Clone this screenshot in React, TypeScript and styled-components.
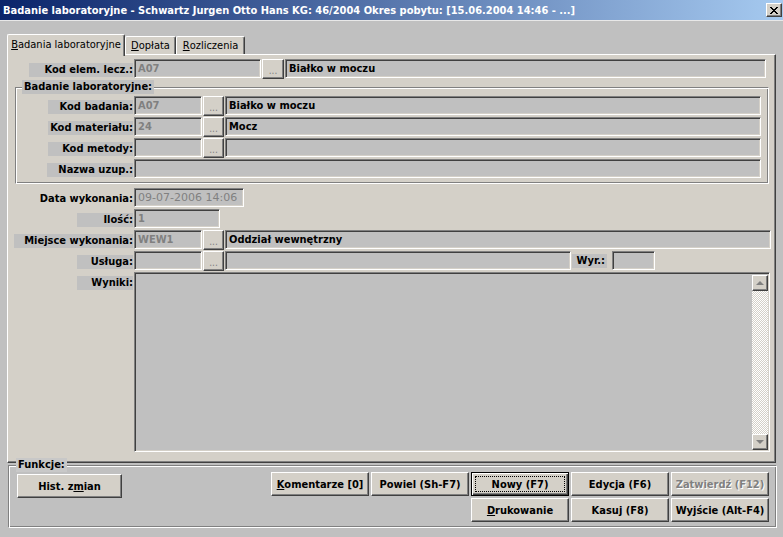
import React from 'react';
import styled, { createGlobalStyle, css } from 'styled-components';

const GlobalStyle = createGlobalStyle`
  html, body {
    margin: 0;
    padding: 0;
    background: #c0c0c0;
  }
  body {
    font-family: "DejaVu Sans Condensed", "DejaVu Sans", sans-serif;
    font-stretch: condensed;
    font-size: 11px;
    color: #000;
  }
  * {
    box-sizing: border-box;
  }
`;

const App = () => {
  return (
    <>
      <GlobalStyle />
      <Window>
        <TitleBar>
          <TitleText>
            Badanie laboratoryjne - Schwartz Jurgen Otto Hans KG: 46/2004 Okres pobytu: [15.06.2004 14:46 - ...]
          </TitleText>
          <CloseButton>
            <svg width="8" height="7" viewBox="0 0 8 7">
              <path d="M0 0 L7 7 M1 0 L8 7 M7 0 L0 7 M8 0 L1 7" stroke="#000" strokeWidth="1" />
            </svg>
          </CloseButton>
        </TitleBar>

        <Body>
          <TabStrip>
            <Tab $active $w={118}>
              <U>B</U>adania laboratoryjne
            </Tab>
            <Tab $w={51}>
              <U>D</U>opłata
            </Tab>
            <Tab $w={69}>
              <U>R</U>ozliczenia
            </Tab>
          </TabStrip>

          <TabPage>
            <Row $mt={4}>
              <LabelCell $w={126}>
                <LabelBox $w={104}>Kod elem. lecz.:</LabelBox>
              </LabelCell>
              <Field $w={127} $dim>A07</Field>
              <DotsButton $w={22}>...</DotsButton>
              <Field $w={481}>Białko w moczu</Field>
            </Row>

            <Group>
              <GroupTitle>Badanie laboratoryjne:</GroupTitle>
              <Row>
                <LabelCell $w={117}>
                  <LabelBox $w={85}>Kod badania:</LabelBox>
                </LabelCell>
                <Field $w={68} $dim>A07</Field>
                <DotsButton $w={21}>...</DotsButton>
                <Field $w={536}>Białko w moczu</Field>
              </Row>
              <Row>
                <LabelCell $w={117}>
                  <LabelBox $w={85}>Kod materiału:</LabelBox>
                </LabelCell>
                <Field $w={68} $dim>24</Field>
                <DotsButton $w={21}>...</DotsButton>
                <Field $w={536}>Mocz</Field>
              </Row>
              <Row>
                <LabelCell $w={117}>
                  <LabelBox $w={85}>Kod metody:</LabelBox>
                </LabelCell>
                <Field $w={68} />
                <DotsButton $w={21}>...</DotsButton>
                <Field $w={536} />
              </Row>
              <Row>
                <LabelCell $w={117}>
                  <LabelBox $w={86}>Nazwa uzup.:</LabelBox>
                </LabelCell>
                <Field $w={627} />
              </Row>
            </Group>

            <Row $mt={4}>
              <LabelCell $w={126}>
                <LabelBox $plain>Data wykonania:</LabelBox>
              </LabelCell>
              <Field $w={110} $dim $thin>09-07-2006 14:06</Field>
            </Row>
            <Row>
              <LabelCell $w={126}>
                <LabelBox $w={56}>Ilość:</LabelBox>
              </LabelCell>
              <Field $w={86} $dim>1</Field>
            </Row>
            <Row>
              <LabelCell $w={126}>
                <LabelBox $w={119}>Miejsce wykonania:</LabelBox>
              </LabelCell>
              <Field $w={68} $dim>WEW1</Field>
              <DotsButton $w={21}>...</DotsButton>
              <Field $w={546}>Oddział wewnętrzny</Field>
            </Row>
            <Row>
              <LabelCell $w={126}>
                <LabelBox $w={56}>Usługa:</LabelBox>
              </LabelCell>
              <Field $w={68} />
              <DotsButton $w={21}>...</DotsButton>
              <Field $w={346} />
              <InlineLabel $w={35}>Wyr.:</InlineLabel>
              <Field $w={43} />
            </Row>
            <Row $tall>
              <LabelCell $w={126}>
                <LabelBox $w={56}>Wyniki:</LabelBox>
              </LabelCell>
              <Memo>
                <ScrollBar>
                  <ScrollArrow $dir="up" />
                  <ScrollTrack />
                  <ScrollArrow $dir="down" />
                </ScrollBar>
              </Memo>
            </Row>
          </TabPage>

          <FuncGroup>
            <FuncTitle>Funkcje:</FuncTitle>
            <HistButton>
              Hist. z<U>m</U>ian
            </HistButton>
            <ButtonGrid>
              <Button>
                <U>K</U>omentarze [0]
              </Button>
              <Button>Powiel (Sh-F7)</Button>
              <Button $focused>
                <FocusRect>Nowy (F7)</FocusRect>
              </Button>
              <Button>Edycja (F6)</Button>
              <Button $disabled>Zatwierdź (F12)</Button>
              <Button $col={3}>
                <U>D</U>rukowanie
              </Button>
              <Button>Kasuj (F8)</Button>
              <Button>Wyjście (Alt-F4)</Button>
            </ButtonGrid>
          </FuncGroup>
        </Body>
      </Window>
    </>
  );
};

const raised = css`
  background: #d4d0c8;
  border: 1px solid;
  border-color: #fff #404040 #404040 #fff;
  box-shadow: inset -1px -1px #808080, inset 1px 1px #d4d0c8;
`;

const sunken = css`
  border: 1px solid;
  border-color: #808080 #fff #fff #808080;
  box-shadow: inset 1px 1px #404040, inset -1px -1px #d4d0c8;
`;

const Window = styled.div`
  width: 783px;
  height: 537px;
  background: #c0c0c0;
  display: flex;
  flex-direction: column;
  overflow: hidden;
`;

const TitleBar = styled.div`
  height: 21px;
  flex: none;
  display: flex;
  align-items: center;
  justify-content: space-between;
  padding: 0 1px 0 3px;
  background: linear-gradient(to right, #0a246a, #a6caf0);
  border-bottom: 1px solid #e8e8e8;
`;

const TitleText = styled.div`
  color: #fff;
  font-weight: bold;
  white-space: nowrap;
`;

const CloseButton = styled.div`
  ${raised};
  width: 16px;
  height: 14px;
  display: flex;
  align-items: center;
  justify-content: center;
`;

const Body = styled.div`
  flex: 1;
  padding: 13px 7px 0 7px;
  display: flex;
  flex-direction: column;
`;

const U = styled.span`
  text-decoration: underline;
`;

const TabStrip = styled.div`
  height: 20px;
  display: flex;
  align-items: flex-end;
  position: relative;
  z-index: 1;
`;

const Tab = styled.div<{ $active?: boolean; $w: number }>`
  width: ${(p) => p.$w}px;
  height: ${(p) => (p.$active ? 22 : 18)}px;
  margin-bottom: ${(p) => (p.$active ? -2 : 0)}px;
  background: #d4d0c8;
  border-top: 1px solid #fff;
  border-left: 1px solid #fff;
  border-right: 1px solid #404040;
  box-shadow: inset -1px 0 #808080;
  border-radius: 2px 2px 0 0;
  display: flex;
  align-items: center;
  justify-content: center;
  padding-bottom: ${(p) => (p.$active ? 3 : 0)}px;
  white-space: nowrap;
`;

const TabPage = styled.div`
  height: 409px;
  flex: none;
  background: #d4d0c8;
  border: 1px solid;
  border-color: #fff #404040 #404040 #fff;
  box-shadow: inset -1px -1px #808080;
  display: flex;
  flex-direction: column;
`;

const Row = styled.div<{ $mt?: number; $tall?: boolean }>`
  display: flex;
  align-items: flex-start;
  gap: 1px;
  height: ${(p) => (p.$tall ? 180 : 21)}px;
  margin-top: ${(p) => p.$mt ?? 0}px;
  flex: none;
`;

const LabelCell = styled.div<{ $w: number }>`
  width: ${(p) => p.$w}px;
  flex: none;
  display: flex;
  justify-content: flex-end;
  padding: 4px 1px 0 0;
  margin-right: -1px;
`;

const LabelBox = styled.div<{ $w?: number; $plain?: boolean }>`
  width: ${(p) => (p.$w ? `${p.$w}px` : 'auto')};
  height: 14px;
  line-height: 14px;
  text-align: right;
  white-space: nowrap;
  font-weight: bold;
  background: ${(p) => (p.$plain ? 'transparent' : '#c0c0c0')};
`;

const InlineLabel = styled(LabelBox)`
  margin: 3px 4px 0 0;
  padding-right: 2px;
`;

const Field = styled.div<{ $w: number; $dim?: boolean; $thin?: boolean }>`
  ${sunken};
  width: ${(p) => p.$w}px;
  height: 19px;
  flex: none;
  background: #c0c0c0;
  padding: 0 0 0 3px;
  line-height: 17px;
  color: ${(p) => (p.$dim ? '#808080' : '#000')};
  font-weight: ${(p) => (p.$thin ? 'normal' : 'bold')};
  ${(p) =>
    p.$thin &&
    css`
      font-family: "DejaVu Sans", sans-serif;
      font-stretch: normal;
    `}
  white-space: nowrap;
  overflow: hidden;
`;

const DotsButton = styled.div<{ $w: number }>`
  ${raised};
  width: ${(p) => p.$w}px;
  height: 20px;
  flex: none;
  color: #808080;
  text-align: center;
  line-height: 22px;
  font-size: 10px;
`;

const Group = styled.div`
  position: relative;
  margin: 7px 6px 0 7px;
  height: 97px;
  flex: none;
  border: 1px solid;
  border-color: #808080 #fff #fff #808080;
  box-shadow: inset 1px 1px #fff, inset -1px -1px #808080;
  padding: 8px 0 0 1px;
`;

const GroupTitle = styled.div`
  position: absolute;
  top: -8px;
  left: 6px;
  height: 14px;
  line-height: 14px;
  padding: 0 2px;
  background: #c0c0c0;
  font-weight: bold;
  white-space: nowrap;
`;

const Memo = styled.div`
  ${sunken};
  width: 636px;
  height: 180px;
  background: #c0c0c0;
  display: flex;
  justify-content: flex-end;
  padding: 2px 1px 1px 2px;
`;

const ScrollBar = styled.div`
  width: 16px;
  display: flex;
  flex-direction: column;
`;

const ScrollTrack = styled.div`
  flex: 1;
  background-image: repeating-conic-gradient(#fff 0 25%, #d4d0c8 0 50%);
  background-size: 2px 2px;
`;

const ScrollArrow = styled.div<{ $dir: 'up' | 'down' }>`
  ${raised};
  width: 16px;
  height: 16px;
  flex: none;
  display: flex;
  align-items: center;
  justify-content: center;
  &::before {
    content: '';
    width: 0;
    height: 0;
    border-left: 4px solid transparent;
    border-right: 4px solid transparent;
    ${(p) =>
      p.$dir === 'up'
        ? 'border-bottom: 4px solid #808080;'
        : 'border-top: 4px solid #808080;'}
  }
`;

const FuncGroup = styled.div`
  position: relative;
  margin: 2px 0 0 1px;
  width: 769px;
  height: 63px;
  flex: none;
  border: 1px solid;
  border-color: #808080 #fff #fff #808080;
  box-shadow: inset 1px 1px #fff, inset -1px -1px #808080;
  display: flex;
  align-items: flex-start;
  padding: 6px 0 0 8px;
`;

const FuncTitle = styled.div`
  position: absolute;
  top: -8px;
  left: 7px;
  height: 14px;
  line-height: 14px;
  padding: 0 2px;
  background: #c8c8c8;
  font-weight: bold;
`;

const buttonText = css`
  font-weight: bold;
  display: flex;
  align-items: center;
  justify-content: center;
  white-space: nowrap;
`;

const HistButton = styled.div`
  ${raised};
  ${buttonText};
  width: 105px;
  height: 24px;
  margin-top: 2px;
`;

const ButtonGrid = styled.div`
  margin-left: 149px;
  display: grid;
  grid-template-columns: repeat(5, 98px);
  grid-auto-rows: 24px;
  gap: 2px 2px;
`;

const Button = styled.div<{ $col?: number; $focused?: boolean; $disabled?: boolean }>`
  ${raised};
  ${buttonText};
  grid-column: ${(p) => (p.$col ? `${p.$col} / span 1` : 'auto')};
  ${(p) =>
    p.$focused &&
    css`
      border: 1px solid #000;
      box-shadow: inset 1px 1px #fff, inset -1px -1px #404040, inset -2px -2px #808080;
      padding: 3px;
    `}
  ${(p) =>
    p.$disabled &&
    css`
      color: #808080;
      text-shadow: 1px 1px #fff;
    `}
`;

const FocusRect = styled.div`
  width: 100%;
  height: 100%;
  border: 1px dotted #000;
  display: flex;
  align-items: center;
  justify-content: center;
`;

export default App;
